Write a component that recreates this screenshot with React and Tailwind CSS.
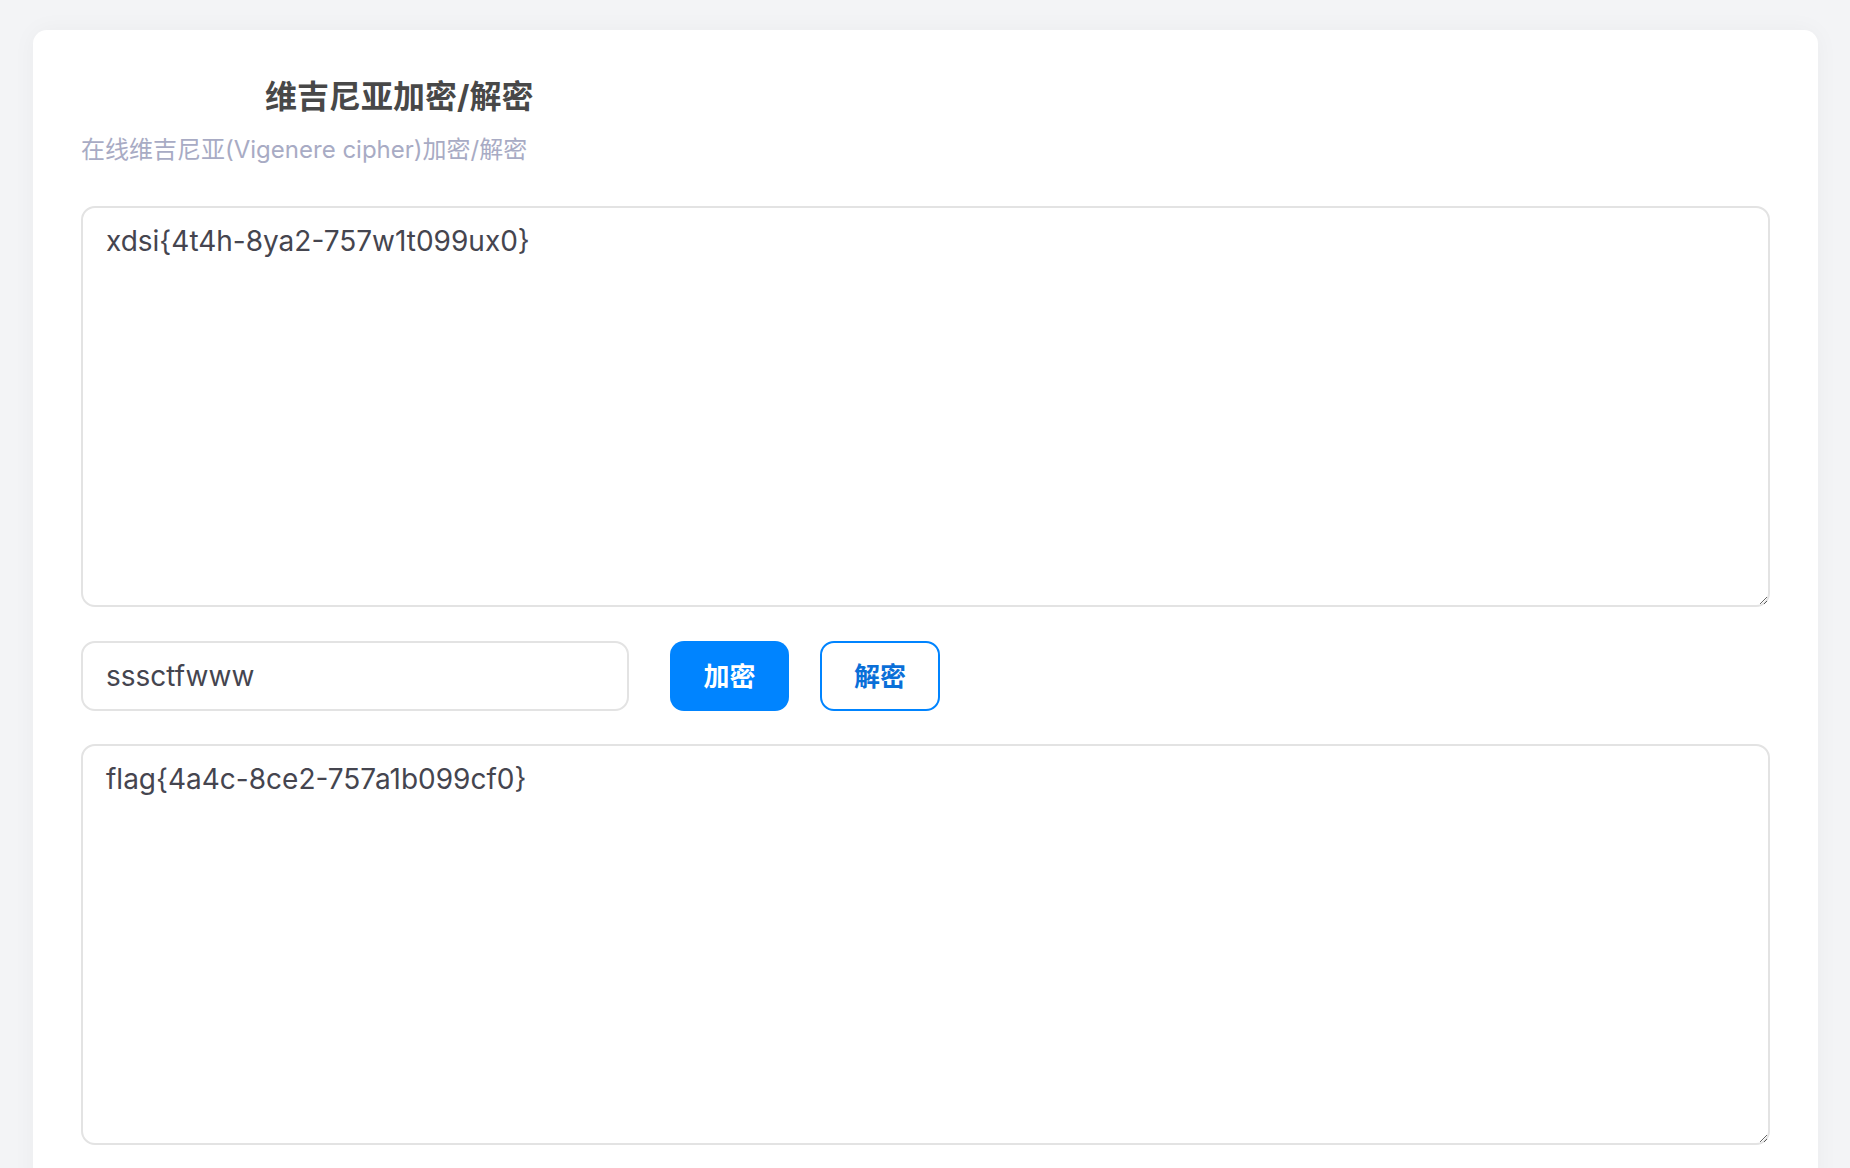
import { useState } from "react"

function App() {
  const [source, setSource] = useState("xdsi{4t4h-8ya2-757w1t099ux0}")
  const [key, setKey] = useState("sssctfwww")
  const [result, setResult] = useState("flag{4a4c-8ce2-757a1b099cf0}")

  const font = { fontFamily: 'Inter, "Noto Sans CJK SC", sans-serif' }

  return (
    <div
      className="min-h-screen bg-[#f3f4f6] pl-[33px] pr-[32px] pt-[30px]"
      style={font}
    >
      <div className="rounded-t-[14px] bg-white px-[48px] pt-[43px] pb-[40px] shadow-[0_0_24px_rgba(0,0,0,0.04)]">
        <h1 className="ml-[184px] text-[32px] font-bold leading-[48px] text-[#484848]">
          维吉尼亚加密/解密
        </h1>
        <p className="mt-[11px] text-[24px] leading-[36px] text-[#a8abc4]">
          在线维吉尼亚(Vigenere cipher)加密/解密
        </p>

        <textarea
          value={source}
          onChange={(e) => setSource(e.target.value)}
          className="mt-[38px] block h-[401px] w-full rounded-[14px] border-2 border-[#e3e3e3] px-[23px] pt-[12px] pb-[10px] text-[28px] leading-[42px] text-[#45454f] outline-none"
        />

        <div className="mt-[34px] flex items-center">
          <input
            value={key}
            onChange={(e) => setKey(e.target.value)}
            className="h-[70px] w-[548px] rounded-[14px] border-2 border-[#e3e3e3] px-[23px] text-[28px] text-[#45454f] outline-none"
          />
          <button className="ml-[41px] h-[70px] w-[119px] rounded-[14px] bg-[#0084ff] text-[26px] font-bold text-white">
            加密
          </button>
          <button className="ml-[31px] h-[70px] w-[120px] rounded-[14px] border-2 border-[#0084ff] bg-white text-[26px] font-bold text-[#0a6fd8]">
            解密
          </button>
        </div>

        <textarea
          value={result}
          onChange={(e) => setResult(e.target.value)}
          className="mt-[33px] block h-[401px] w-full rounded-[14px] border-2 border-[#e3e3e3] px-[23px] pt-[12px] pb-[10px] text-[28px] leading-[42px] text-[#45454f] outline-none"
        />
      </div>
    </div>
  )
}

export default App
